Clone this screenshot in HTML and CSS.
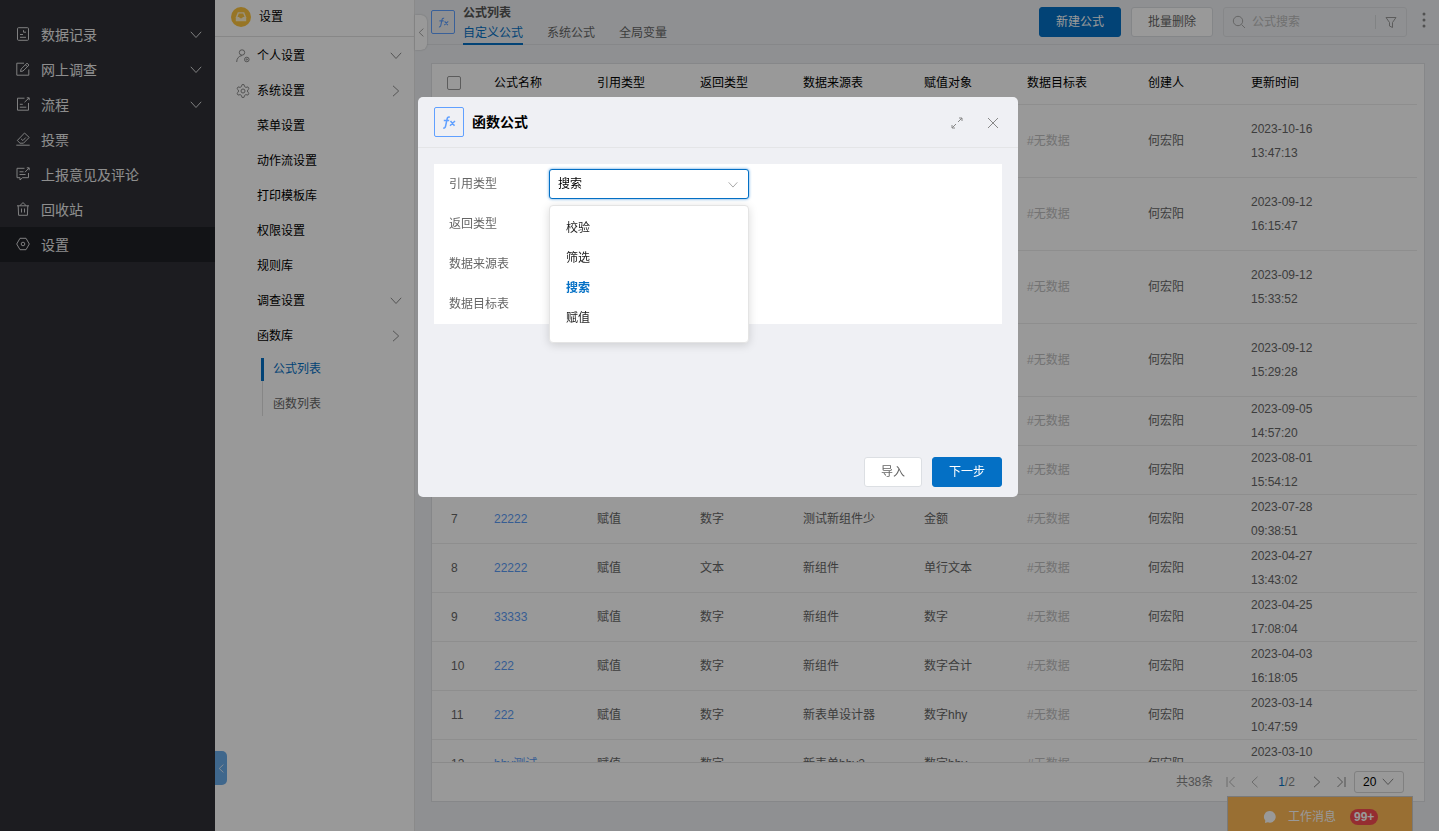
FILE: index.html
```html
<!DOCTYPE html>
<html lang="zh-CN">
<head>
<meta charset="utf-8">
<title>公式列表</title>
<link rel="stylesheet" href="styles.css">
</head>
<body>
<svg class="sprite" aria-hidden="true">
  <symbol id="down" viewBox="0 0 12 12"><path d="M.8 2.800 6 8.500l5.200-5.700"/></symbol>
  <symbol id="right" viewBox="0 0 12 12"><path d="M3 .8 8.700 6 3 11.200"/></symbol>
  <symbol id="left" viewBox="0 0 12 12"><path d="M8.500.8 3 6l5.500 5.200"/></symbol>
  <symbol id="fx" viewBox="0 0 14 13"><path d="M7.800 1.300C6 .6 5.400 1.600 5.100 3L3.600 10C3.300 11.700 2.500 12.400 1.200 12M1.800 4.500h5.400M8.500 5l4 4.800M13 5 8 9.800"/></symbol>
</svg>

<div class="app">
  <nav class="sidebar">
    <a class="side-item" href="#"><svg class="icon14" viewBox="0 0 14 14"><rect x="1.500" y=".7" width="11" height="12.600" rx="1"/><path d="M4 7.500h3M4 10.300h6M7.500 3.200v2h2.500"/></svg><span>数据记录</span><svg class="chev"><use href="#down"/></svg></a>
    <a class="side-item" href="#"><svg class="icon14" viewBox="0 0 14 14"><path d="M8 1.200H.8v12h12V7.500M4.500 9.500l.6-2.500L11 1.200l2 1.900-6 5.900zM9.500 2.800l1.900 1.900"/></svg><span>网上调查</span><svg class="chev"><use href="#down"/></svg></a>
    <a class="side-item" href="#"><svg class="icon14" viewBox="0 0 14 14"><path d="M8.500 1.200h-7v12h11V6M3.800 7.300h3M3.800 10.200h6.500M8.500 5.200 13 1M10.800.8h2.400v2.400"/></svg><span>流程</span><svg class="chev"><use href="#down"/></svg></a>
    <a class="side-item" href="#"><svg class="icon14" viewBox="0 0 14 14"><path d="M.3 13.200h13.400M4 11.200 1.300 8.500 8.500 1l4.700 4.400-5.700 5.800zM5 6.800l1.900 1.800L9.800 5.500"/></svg><span>投票</span></a>
    <a class="side-item" href="#"><svg class="icon14" viewBox="0 0 14 14"><path d="M8.500 1.300H1v9.400h3v2.300l2.500-2.300h6V6M3.500 4.800h4M3.500 7.500h6M9 5.200 13 1M10.800.8h2.400v2.400"/></svg><span>上报意见及评论</span></a>
    <a class="side-item" href="#"><svg class="icon14" viewBox="0 0 14 14"><path d="M1 3.800h12M2.200 3.800l.4 9.500h8.800l.4-9.500M4 3.500 7 .6l3 2.900M5.500 6.500v4M8.500 6.500v4"/></svg><span>回收站</span></a>
    <a class="side-item side-active" href="#"><svg class="icon14" viewBox="0 0 14 14"><path d="M4 1.300h6L13.300 7 10 12.700H4L.7 7z"/><circle cx="7" cy="7" r="1.800"/></svg><span>设置</span></a>
  </nav>

  <aside class="settings">
    <button class="blue-tab" type="button" aria-label="收起菜单"><svg><use href="#left"/></svg></button>
    <header class="settings-head">
      <svg class="avatar" viewBox="0 0 20 20"><circle cx="10" cy="10" r="10"/><path d="M6.800 5.300h6.400l2 5v4H4.800v-4z"/><path class="avatar-cut" d="M6.500 10h1.700c.2 1.800 3.400 1.800 3.600 0h1.700l-1.300-3.400H7.800z"/></svg>
      <span>设置</span>
    </header>
    <ul class="menu">
      <li><a class="menu-item" href="#"><svg class="icon14" viewBox="0 0 14 14"><circle cx="6" cy="3.500" r="2.700"/><path d="M.7 13c0-3.500 2-6 5.300-6.500"/><circle cx="10.800" cy="10.500" r="2.300"/><circle cx="10.800" cy="10.500" r=".7"/></svg><span>个人设置</span><svg class="chev"><use href="#down"/></svg></a></li>
      <li><a class="menu-item" href="#"><svg class="icon14" viewBox="0 0 14 14"><path d="M5.400 2.600 6 .6h2l.6 2 1.300.8 2-.5 1.100 1.800L11.600 6v2l1.400 1.300-1.100 1.800-2-.5-1.300.8-.6 2H6l-.6-2-1.300-.8-2 .5L1 9.300 2.400 8V6L1 4.700l1.100-1.800 2 .5z"/><circle cx="7" cy="7" r="2"/></svg><span>系统设置</span><svg class="chev"><use href="#right"/></svg></a></li>
      <li><a class="menu-item plain" href="#"><span>菜单设置</span></a></li>
      <li><a class="menu-item plain" href="#"><span>动作流设置</span></a></li>
      <li><a class="menu-item plain" href="#"><span>打印模板库</span></a></li>
      <li><a class="menu-item plain" href="#"><span>权限设置</span></a></li>
      <li><a class="menu-item plain" href="#"><span>规则库</span></a></li>
      <li><a class="menu-item plain" href="#"><span>调查设置</span><svg class="chev"><use href="#down"/></svg></a></li>
      <li><a class="menu-item plain" href="#"><span>函数库</span><svg class="chev"><use href="#right"/></svg></a>
        <ul class="submenu">
          <li><a class="sub-active" href="#">公式列表</a></li>
          <li><a href="#">函数列表</a></li>
        </ul>
      </li>
    </ul>
  </aside>

  <main class="main">
    <button class="white-tab" type="button" aria-label="收起"><svg><use href="#left"/></svg></button>
    <header class="topbar">
      <span class="fx-box"><svg><use href="#fx"/></svg></span>
      <div class="heading">
        <h1>公式列表</h1>
        <div class="tabs"><a class="tab-active" href="#">自定义公式</a><a href="#">系统公式</a><a href="#">全局变量</a></div>
      </div>
      <div class="tools">
        <button class="btn primary" type="button">新建公式</button>
        <button class="btn" type="button">批量删除</button>
        <div class="search">
          <svg class="icon14" viewBox="0 0 14 14"><circle cx="6" cy="6" r="4.700"/><path d="m9.500 9.500 3.500 3.500"/></svg>
          <input type="text" placeholder="公式搜索" aria-label="公式搜索">
          <button class="filter" type="button" aria-label="筛选"><svg class="icon14" viewBox="0 0 14 14"><path d="M2 2.500h10L8.500 7.500v5l-3-1.500V7.500z"/></svg></button>
        </div>
        <button class="kebab" type="button" aria-label="更多"><svg viewBox="0 0 4 16"><circle cx="2" cy="2" r="1.500"/><circle cx="2" cy="8" r="1.500"/><circle cx="2" cy="14" r="1.500"/></svg></button>
      </div>
    </header>

    <section class="panel">
      <div class="table-wrap">
        <table>
          <colgroup><col class="c-num"><col class="c-a"><col class="c-a"><col class="c-a"><col class="c-b"><col class="c-a"><col class="c-b"><col class="c-a"><col class="c-a"><col></colgroup>
          <thead><tr><th><input class="check" type="checkbox" aria-label="全选"></th><th>公式名称</th><th>引用类型</th><th>返回类型</th><th>数据来源表</th><th>赋值对象</th><th>数据目标表</th><th>创建人</th><th>更新时间</th><th></th></tr></thead>
          <tbody>
            <tr class="tall"><td></td><td></td><td></td><td></td><td></td><td></td><td class="none">#无数据</td><td>何宏阳</td><td>2023-10-16 13:47:13</td><td></td></tr>
            <tr class="tall"><td></td><td></td><td></td><td></td><td></td><td></td><td class="none">#无数据</td><td>何宏阳</td><td>2023-09-12 16:15:47</td><td></td></tr>
            <tr class="tall"><td></td><td></td><td></td><td></td><td></td><td></td><td class="none">#无数据</td><td>何宏阳</td><td>2023-09-12 15:33:52</td><td></td></tr>
            <tr class="tall"><td></td><td></td><td></td><td></td><td></td><td></td><td class="none">#无数据</td><td>何宏阳</td><td>2023-09-12 15:29:28</td><td></td></tr>
            <tr><td></td><td></td><td></td><td></td><td></td><td></td><td class="none">#无数据</td><td>何宏阳</td><td>2023-09-05 14:57:20</td><td></td></tr>
            <tr><td></td><td></td><td></td><td></td><td></td><td></td><td class="none">#无数据</td><td>何宏阳</td><td>2023-08-01 15:54:12</td><td></td></tr>
            <tr><td>7</td><td><a href="#">22222</a></td><td>赋值</td><td>数字</td><td>测试新组件少</td><td>金额</td><td class="none">#无数据</td><td>何宏阳</td><td>2023-07-28 09:38:51</td><td></td></tr>
            <tr><td>8</td><td><a href="#">22222</a></td><td>赋值</td><td>文本</td><td>新组件</td><td>单行文本</td><td class="none">#无数据</td><td>何宏阳</td><td>2023-04-27 13:43:02</td><td></td></tr>
            <tr><td>9</td><td><a href="#">33333</a></td><td>赋值</td><td>数字</td><td>新组件</td><td>数字</td><td class="none">#无数据</td><td>何宏阳</td><td>2023-04-25 17:08:04</td><td></td></tr>
            <tr><td>10</td><td><a href="#">222</a></td><td>赋值</td><td>数字</td><td>新组件</td><td>数字合计</td><td class="none">#无数据</td><td>何宏阳</td><td>2023-04-03 16:18:05</td><td></td></tr>
            <tr><td>11</td><td><a href="#">222</a></td><td>赋值</td><td>数字</td><td>新表单设计器</td><td>数字hhy</td><td class="none">#无数据</td><td>何宏阳</td><td>2023-03-14 10:47:59</td><td></td></tr>
            <tr><td>12</td><td><a href="#">hhy测试</a></td><td>赋值</td><td>数字</td><td>新表单hhy2</td><td>数字hhy</td><td class="none">#无数据</td><td>何宏阳</td><td class="date-top">2023-03-10</td><td></td></tr>
          </tbody>
        </table>
      </div>
      <footer class="pager">
        <span class="total">共38条</span>
        <button type="button" aria-label="首页"><svg viewBox="0 0 12 12"><path d="M2 1v10M9.500 1l-5 5 5 5"/></svg></button>
        <button type="button" aria-label="上一页"><svg><use href="#left"/></svg></button>
        <span class="pages"><b>1</b>/2</span>
        <button class="on" type="button" aria-label="下一页"><svg><use href="#right"/></svg></button>
        <button class="on" type="button" aria-label="末页"><svg viewBox="0 0 12 12"><path d="M10 1v10M2.500 1l5 5-5 5"/></svg></button>
        <span class="size"><select aria-label="每页条数"><option>20</option></select><svg><use href="#down"/></svg></span>
      </footer>
    </section>
  </main>
</div>

<button class="messages" type="button">
  <svg viewBox="0 0 14 14"><path d="M7 1a5.800 5.800 0 1 1-2.200 11.200L2 13l.3-2.500A5.800 5.800 0 0 1 7 1z"/></svg>
  <span>工作消息</span><span class="count">99+</span>
</button>

<div class="overlay">
  <div class="modal" role="dialog" aria-labelledby="dlg-title">
    <header class="modal-head">
      <span class="fx-box large"><svg><use href="#fx"/></svg></span>
      <h2 id="dlg-title">函数公式</h2>
      <button type="button" aria-label="全屏"><svg viewBox="0 0 12 12"><path d="M7 5l4-4M8 1h3v3M5 7l-4 4M1 8v3h3"/></svg></button>
      <button type="button" aria-label="关闭"><svg viewBox="0 0 12 12"><path d="M1 1l10 10M11 1 1 11"/></svg></button>
    </header>
    <div class="modal-body">
      <form class="form">
        <div class="row">
          <label for="ref-type">引用类型</label>
          <div class="field">
            <select id="ref-type"><option>搜索</option></select>
            <svg><use href="#down"/></svg>
            <ul class="dropdown" role="listbox" aria-label="引用类型">
              <li role="option">校验</li><li role="option">筛选</li><li class="chosen" role="option" aria-selected="true">搜索</li><li role="option">赋值</li>
            </ul>
          </div>
        </div>
        <div class="row"><span>返回类型</span></div>
        <div class="row"><span>数据来源表</span></div>
        <div class="row"><span>数据目标表</span></div>
      </form>
    </div>
    <footer class="modal-foot">
      <button class="btn" type="button">导入</button>
      <button class="btn primary" type="button">下一步</button>
    </footer>
  </div>
</div>
</body>
</html>
```
FILE: styles.css
```css
* { box-sizing: border-box; }
body, h1, h2, ul { margin: 0; padding: 0; }
ul { list-style: none; }
body, button, input, select { font: 12px/24px "Liberation Sans", "Noto Sans CJK SC", sans-serif; }
body { color: #666; overflow: hidden; }
a { color: inherit; text-decoration: none; }
button { border: 0; background: none; padding: 0; color: inherit; }
svg { width: 12px; height: 12px; fill: none; stroke: currentColor; flex: none; }
.sprite { display: none; }
.icon14 { width: 14px; height: 14px; }

.app { display: flex; height: 100vh; }

.sidebar { width: 215px; flex: none; padding-top: 17px; background: #2f3036; color: #ededed; font-size: 14px; }
.side-item { display: flex; align-items: center; height: 35px; padding: 0 13px 0 16px; gap: 11px; }
.side-item svg { color: #d4d4d6; }
.side-item .icon14 { margin-bottom: 2px; }
.side-active { background: #1f2025; }
.chev { margin-left: auto; }

.settings { position: relative; width: 200px; flex: none; background: #fff; border-right: 1px solid #e6e6e6; color: #000; }
.settings-head { display: flex; align-items: center; gap: 8px; height: 37px; padding: 0 16px 3px; border-bottom: 1px solid #e2e2e2; }
.avatar { width: 20px; height: 20px; stroke: none; fill: #fff3d0; }
.avatar circle, .avatar-cut { fill: #fcc43e; }
.menu { padding-top: 1px; }
.menu-item { display: flex; align-items: center; height: 35px; padding: 0 12px 0 21px; gap: 7px; }
.menu-item svg { color: #8c8c8c; }
.plain { padding-left: 42px; }
.submenu { margin: 5px 0 0 47px; border-left: 1px solid #e0e0e0; display: grid; gap: 12px; color: #666; }
.submenu a { position: relative; display: block; padding-left: 10px; line-height: 23px; }
.submenu .sub-active { color: #0470c5; }
.sub-active::before { content: ""; position: absolute; left: -2px; top: 0; width: 3px; height: 100%; background: #0470c5; }
.blue-tab { position: absolute; left: 0; bottom: 46px; width: 12px; height: 34px; border-radius: 0 5px 5px 0; background: #6aace9; color: #fff; display: grid; place-items: center; }
.blue-tab svg, .white-tab svg { width: 9px; height: 9px; }

.main { position: relative; flex: 1; min-width: 0; display: flex; flex-direction: column; background: #eff1f4; }
.white-tab { position: absolute; left: 0; top: 15px; width: 12px; height: 35px; border-radius: 0 6px 6px 0; background: #fff; color: #888; display: grid; place-items: center; box-shadow: 0 0 2px #bbb; }
.topbar { display: flex; height: 45px; flex: none; padding: 0 8px 0 16px; border-bottom: 1px solid #dfe1e4; }
.fx-box { display: grid; place-items: center; width: 24px; height: 24px; margin-top: 10px; border: 1px solid #60a0ff; border-radius: 2px; color: #60a0ff; }
.fx-box svg { width: 11px; height: 11px; stroke-width: 1.500; }
.heading { margin-left: 8px; padding-top: 3px; }
.heading h1 { font-size: 12px; line-height: 20px; color: #555; }
.tabs { display: flex; gap: 24px; line-height: 20px; }
.tab-active { color: #0470c5; border-bottom: 2px solid #0470c5; }
.tools { display: flex; gap: 10px; margin-left: auto; padding-top: 7px; }
.btn { height: 30px; padding: 0 16px; border: 1px solid #dcdfe3; border-radius: 3px; background: #fff; color: #666; }
.primary { border-color: #0470c5; background: #0470c5; color: #fff; }
.search { display: flex; align-items: center; width: 184px; height: 30px; padding-left: 8px; border: 1px solid #dfe1e4; border-radius: 3px; color: #aaa; }
.search input { flex: 1; min-width: 0; padding: 0 6px; border: 0; background: none; }
.search input::placeholder { color: #bbb; }
.filter { display: grid; place-items: center; width: 31px; height: 14px; border-left: 1px solid #d8dadd; color: #999; }
.kebab { width: 14px; height: 26px; display: grid; place-items: center; color: #888; }
.kebab svg { width: 4px; height: 16px; fill: currentColor; stroke: none; }

.panel { flex: 1; min-height: 0; display: flex; flex-direction: column; margin: 18px 14px 29px 16px; border: 1px solid #dfe1e4; background: #fff; }
.table-wrap { flex: 1; min-height: 0; overflow: hidden; padding-right: 7px; }
table { width: 100%; table-layout: fixed; border-collapse: separate; border-spacing: 0; }
.c-num { width: 46px; }
.c-a { width: 103px; }
.c-b { width: 121px; }
th, td { padding: 0 16px; text-align: left; border-bottom: 1px solid #ededed; }
th { height: 41px; padding-bottom: 2px; font-weight: 400; color: #000; }
td { height: 49px; }
.tall td { height: 73px; }
.date-top { vertical-align: top; }
th:first-child, td:first-child { padding: 0 0 0 19px; }
th:first-child { padding: 0 0 2px 15px; }
td a { color: #5b9bf5; }
.none { color: #c0c0c0; }
.check { display: block; appearance: none; width: 14px; height: 14px; margin: 0; border: 1px solid #999; border-radius: 2px; }
.pager { display: flex; align-items: center; height: 39px; flex: none; padding-right: 20px; border-top: 1px solid #e6e6e6; color: #888; }
.pager button { display: grid; margin: 0 0 0 12px; color: #b4b4b4; }
.pager .on { color: #888; }
.pages { margin: 0 4px 0 17px; }
.pages b { font-weight: 400; color: #0470c5; }
.total { margin-left: auto; }
.size { position: relative; display: flex; margin-left: 7px; }
.size select { appearance: none; width: 50px; height: 22px; padding: 0 8px; border: 1px solid #d5d5d5; border-radius: 3px; background: #fff; color: #000; line-height: 20px; }
.size svg { position: absolute; right: 10px; top: 5px; }

.messages { position: fixed; right: 26px; bottom: 0; display: flex; align-items: center; width: 186px; height: 35px; padding: 5px 0 0 35px; border: 1px solid #ccc; border-bottom: 0; background: #ffb955; color: #fff; }
.messages svg { width: 14px; height: 14px; margin-right: 11px; fill: #fff; stroke: none; }
.count { margin-left: 14px; padding: 0 4px; border-radius: 8px; background: #f84c52; font-weight: 700; line-height: 16px; }

.overlay { position: fixed; inset: 0; display: flex; justify-content: center; align-items: flex-start; padding: 97px 3px 0 0; background: rgba(0, 0, 0, .4); }
.modal { width: 600px; min-height: 400px; display: flex; flex-direction: column; border-radius: 5px; background: #eff0f4; }
.modal-head { display: flex; align-items: center; gap: 24px; height: 51px; padding: 0 19px 0 16px; border-bottom: 1px solid #e4e5e7; }
.modal-head h2 { flex: 1; margin-left: -16px; font-size: 14px; color: #000; }
.modal-head button { display: grid; padding-top: 2px; color: #888; }
.large { width: 30px; height: 30px; margin: 0; }
.large svg { width: 14px; height: 13px; }
.modal-body { flex: 1; padding: 16px; }
.form { background: #fff; }
.row { display: flex; align-items: center; height: 40px; padding: 0 15px; }
.row label { width: 100px; }
.field { position: relative; display: flex; width: 200px; }
.field select { appearance: none; width: 100%; height: 30px; padding: 0 8px; border: 1px solid #0470c5; border-radius: 3px; background: #fff; color: #000; box-shadow: 0 0 3px #4c9ade; }
.field > svg { position: absolute; right: 11px; top: 11px; width: 10px; height: 10px; color: #999; }
.dropdown { position: absolute; left: 0; right: 0; top: 36px; padding: 7px 0 9px; border: 1px solid #e4e4e4; border-radius: 4px; background: #fff; color: #222; box-shadow: 0 2px 10px rgba(0, 0, 0, .15); }
.dropdown li { padding: 0 16px; line-height: 30px; }
.chosen { color: #0470c5; font-weight: 700; }
.modal-foot { display: flex; justify-content: flex-end; gap: 10px; padding: 0 16px 10px; }
```
